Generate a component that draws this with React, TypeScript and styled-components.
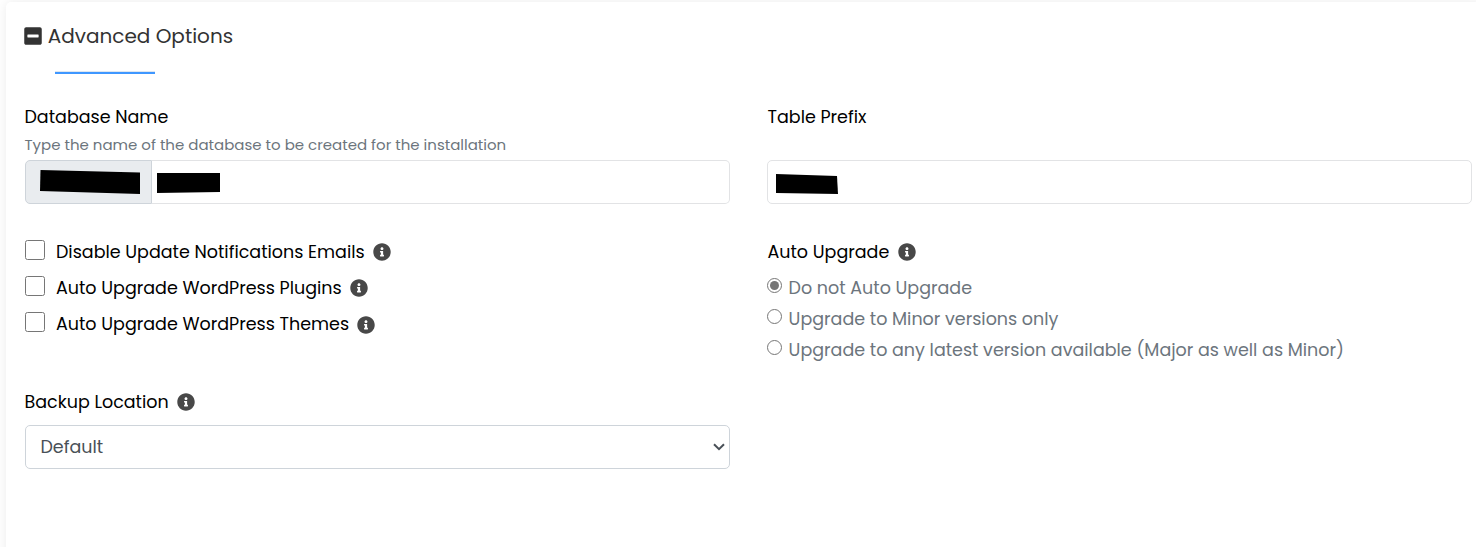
import React, { useState } from 'react';
import styled, { createGlobalStyle } from 'styled-components';
import { FaInfoCircle, FaMinusSquare } from 'react-icons/fa';

const GlobalStyle = createGlobalStyle`
  * { box-sizing: border-box; }
  body {
    margin: 0;
    background: #fff;
    color: #000;
    font-family: Poppins, Inter, 'Open Sans', sans-serif;
    font-size: 17.5px;
    overflow: hidden;
  }
`;

const Page = styled.main`
  height: 547px;
  padding: 2px 0 0 6px;
  overflow: hidden;
`;

const Panel = styled.section`
  width: 1480px;
  height: 600px;
  padding: 16px 0 0 19px;
  background: #fff;
  border-radius: 5px;
  box-shadow: 0 0 12px rgba(0, 0, 0, 0.08);
`;

const Header = styled.header`
  display: flex;
  align-items: center;
  gap: 4.5px;
  height: 36px;
  color: #333;
  svg { flex: none; margin-left: -1.8px; }
`;

const Title = styled.h2`
  margin: 0;
  font-size: 20px;
  font-weight: 400;
`;

const Accent = styled.div`
  width: 100px;
  height: 3px;
  margin: 17px 0 31px 30px;
  background: #3f97ff;
  border-top: 1px solid #dfe6ee;
`;

const Columns = styled.div`
  display: grid;
  grid-template-columns: 705px 705px;
  column-gap: 37px;
`;

const Field = styled.div`
  display: flex;
  flex-direction: column;
`;

const Label = styled.div<{ $nudge?: number }>`
  display: flex;
  align-items: center;
  height: 24px;
  margin-left: ${(p) => p.$nudge ?? -0.5}px;
  white-space: nowrap;
`;

const Hint = styled.div`
  height: 21px;
  margin: 5px 0 5px -0.5px;
  line-height: 21px;
  font-size: 15px;
  color: #6c757d;
`;

const InputGroup = styled.div`
  display: flex;
  height: 44px;
`;

const Addon = styled.div`
  width: 127px;
  background: #e9ecef;
  border: 1px solid #ced4da;
  border-radius: 5px 0 0 5px;
`;

const InputBox = styled.div<{ $joined?: boolean }>`
  flex: 1;
  background: #fff;
  border: 1px solid #e2e3e5;
  border-left-width: ${(p) => (p.$joined ? 0 : 1)}px;
  border-radius: ${(p) => (p.$joined ? '0 5px 5px 0' : '5px')};
`;

const Mask = styled.svg`
  display: block;
  fill: #000;
`;

const CheckList = styled.div`
  margin-top: 30px;
`;

const CheckRow = styled.label`
  display: flex;
  align-items: center;
  height: 36px;
  white-space: nowrap;
  input {
    width: 20px;
    height: 20px;
    margin: 0 11px 4px 0;
  }
`;

const InfoIcon = styled(FaInfoCircle)<{ $gap?: number; $drop?: number }>`
  flex: none;
  width: 18px;
  height: 18px;
  margin-left: ${(p) => p.$gap ?? 8.6}px;
  margin-top: ${(p) => p.$drop ?? 0.5}px;
  color: #484848;
`;

const UpgradePolicy = styled.div`
  margin-top: 36px;
`;

const RadioGroup = styled.div`
  margin-top: 8px;
`;

const RadioRow = styled.label`
  display: flex;
  align-items: center;
  height: 31px;
  white-space: nowrap;
  color: #6c757d;
  input {
    width: 15px;
    height: 15px;
    margin: 0 6.6px 4px 0;
    accent-color: #767676;
  }
`;

const Backup = styled.div`
  width: 705px;
  margin-top: 25px;
`;

const SelectBox = styled.div`
  display: flex;
  align-items: center;
  justify-content: space-between;
  height: 44px;
  margin-top: 11px;
  padding: 0 4px 0 14.5px;
  border: 1px solid #ced4da;
  border-radius: 5px;
  color: #495057;
`;

const checks = [
  { text: 'Disable Update Notifications Emails', drop: 0.5 },
  { text: 'Auto Upgrade WordPress Plugins', drop: 0.5 },
  { text: 'Auto Upgrade WordPress Themes', drop: 2.2 },
];

const radios = [
  'Do not Auto Upgrade',
  'Upgrade to Minor versions only',
  'Upgrade to any latest version available (Major as well as Minor)',
];

export default function App() {
  const [mode, setMode] = useState(0);
  return (
    <Page>
      <GlobalStyle />
      <Panel>
        <Header>
          <FaMinusSquare size={20} />
          <Title>Advanced Options</Title>
        </Header>
        <Accent />

        <Columns>
          <Field>
            <Label>Database Name</Label>
            <Hint>Type the name of the database to be created for the installation</Hint>
            <InputGroup>
              <Addon>
                <Mask width="125" height="42">
                  <path d="M14.5 9 L114 11.5 V33 L14 30Z" />
                </Mask>
              </Addon>
              <InputBox $joined>
                <Mask width="120" height="42">
                  <path d="M5 12 H68 V31 L5 32Z" />
                </Mask>
              </InputBox>
            </InputGroup>
          </Field>
          <Field>
            <Label $nudge={0.5}>Table Prefix</Label>
            <Hint />
            <InputGroup>
              <InputBox>
                <Mask width="120" height="42">
                  <path d="M8 13 L69 15 L70 33 L8 32Z" />
                </Mask>
              </InputBox>
            </InputGroup>
          </Field>

          <CheckList>
            {checks.map((c) => (
              <CheckRow key={c.text}>
                <input type="checkbox" />
                {c.text}
                <InfoIcon $gap={8.2} $drop={c.drop} />
              </CheckRow>
            ))}
          </CheckList>
          <UpgradePolicy>
            <Label $nudge={0.5}>
              Auto Upgrade
              <InfoIcon />
            </Label>
            <RadioGroup>
              {radios.map((text, i) => (
                <RadioRow key={text}>
                  <input
                    type="radio"
                    name="auto-upgrade"
                    checked={mode === i}
                    onChange={() => setMode(i)}
                  />
                  {text}
                </RadioRow>
              ))}
            </RadioGroup>
          </UpgradePolicy>
        </Columns>

        <Backup>
          <Label>
            Backup Location
            <InfoIcon />
          </Label>
          <SelectBox>
            Default
            <svg width="12" height="8" viewBox="0 0 12 8" fill="none" stroke="currentColor" strokeWidth="2">
              <path d="M1 1.2 L6 6.2 L11 1.2" />
            </svg>
          </SelectBox>
        </Backup>
      </Panel>
    </Page>
  );
}
